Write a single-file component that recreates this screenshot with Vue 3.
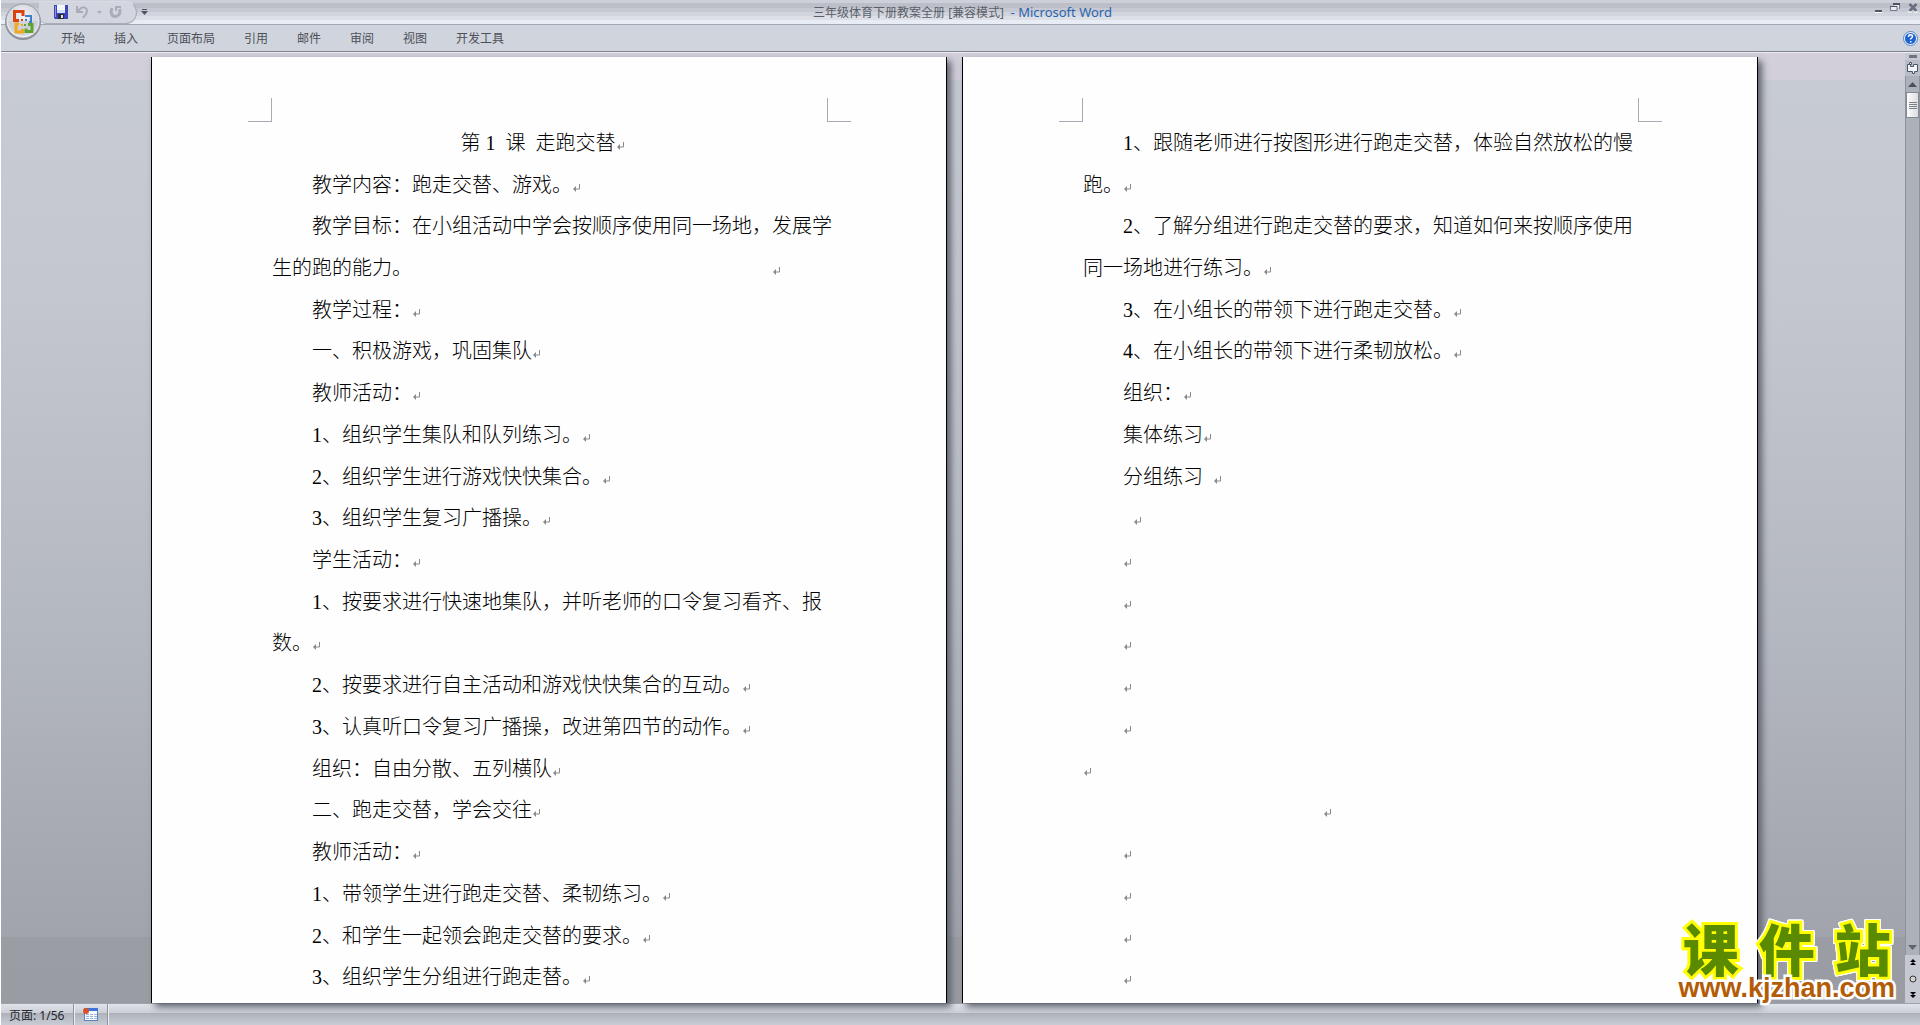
<script setup>
const tabs = ['开始', '插入', '页面布局', '引用', '邮件', '审阅', '视图', '开发工具']

const sp = (n) => ' '.repeat(n)

const pages = [
  [
    { text: '第 1  课  走跑交替', kind: 'title' },
    { text: '教学内容：跑走交替、游戏。' },
    { text: '教学目标：在小组活动中学会按顺序使用同一场地，发展学', noMark: true },
    { text: '生的跑的能力。' + sp(72), kind: 'flush' },
    { text: '教学过程：' },
    { text: '一、积极游戏，巩固集队' },
    { text: '教师活动：' },
    { text: '1、组织学生集队和队列练习。' },
    { text: '2、组织学生进行游戏快快集合。' },
    { text: '3、组织学生复习广播操。' },
    { text: '学生活动：' },
    { text: '1、按要求进行快速地集队，并听老师的口令复习看齐、报', noMark: true },
    { text: '数。', kind: 'flush' },
    { text: '2、按要求进行自主活动和游戏快快集合的互动。' },
    { text: '3、认真听口令复习广播操，改进第四节的动作。' },
    { text: '组织：自由分散、五列横队' },
    { text: '二、跑走交替，学会交往' },
    { text: '教师活动：' },
    { text: '1、带领学生进行跑走交替、柔韧练习。' },
    { text: '2、和学生一起领会跑走交替的要求。' },
    { text: '3、组织学生分组进行跑走替。' },
  ],
  [
    { text: '1、跟随老师进行按图形进行跑走交替，体验自然放松的慢', noMark: true },
    { text: '跑。', kind: 'flush' },
    { text: '2、了解分组进行跑走交替的要求，知道如何来按顺序使用', noMark: true },
    { text: '同一场地进行练习。', kind: 'flush' },
    { text: '3、在小组长的带领下进行跑走交替。' },
    { text: '4、在小组长的带领下进行柔韧放松。' },
    { text: '组织：' },
    { text: '集体练习' },
    { text: '分组练习' + sp(2) },
    { text: sp(2) },
    { text: '' },
    { text: '' },
    { text: '' },
    { text: '' },
    { text: '' },
    { text: '', kind: 'flush' },
    { text: sp(48), kind: 'flush' },
    { text: '' },
    { text: '' },
    { text: '' },
    { text: '' },
  ],
]
</script>

<template>
  <div class="window">
    <header class="head">
      <div class="titlebar">
        <div class="quick">
          <button class="qbtn" aria-label="保存">
            <svg width="14" height="14" viewBox="0 0 14 14">
              <path d="M0 0h14v14H1l-1-1z" fill="#3f45b8" />
              <path d="M1 1h1v11H1z" fill="#8d95e8" />
              <path d="M3 0h8v8H3z" fill="#f2f6fd" />
              <path d="M3 5h8v3H3z" fill="#cfe0f8" />
              <path d="M4 9h6v5H4z" fill="#2b2e38" />
              <path d="M7 10h2v3H7z" fill="#dfe3ee" />
            </svg>
          </button>
          <button class="qbtn" aria-label="撤消">
            <svg width="14" height="14" viewBox="0 0 14 14" fill="none" stroke="#a9adb8" stroke-width="2">
              <path d="M2 1v6h6M3 6l3-3c3-2 6 0 6 3s-2 4-4 7" />
            </svg>
          </button>
          <button class="qbtn small" aria-label="撤消列表">
            <svg width="5" height="3" viewBox="0 0 5 3"><path d="M0 0h5L2.500 3z" fill="#a9adb8" /></svg>
          </button>
          <button class="qbtn" aria-label="重复">
            <svg width="14" height="14" viewBox="0 0 14 14" fill="none" stroke="#a9adb8">
              <path d="M3 3C1 8 3 11.500 6 11.500s6-2.500 4.500-7.500" stroke-width="3" />
              <path d="M7 6V2h5" stroke-width="2" />
            </svg>
          </button>
        </div>
        <button class="qbtn more" aria-label="自定义快速访问工具栏">
          <svg width="7" height="7" viewBox="0 0 7 7" fill="#50545e"><path d="M1 0h5v1H1zM0 2h7L3.500 6z" /></svg>
        </button>
        <h1 class="caption">三年级体育下册教案全册 [兼容模式] <span>&nbsp;- Microsoft Word</span></h1>
        <div class="controls">
          <button aria-label="最小化">
            <svg width="8" height="10" viewBox="0 0 8 10"><path d="M1 7h7v2H1z" fill="#50545e" /><path d="M1 9h7v1H1z" fill="#fff" /></svg>
          </button>
          <button aria-label="还原">
            <svg width="10" height="10" viewBox="0 0 10 10"><path d="M3 1.500h6.500V6M.500 3.500h6.500v4H.500z" fill="#e9ebf2" stroke="#70788a" /><path d="M3 0h7v2H3zM0 3h7v1H0z" fill="#50545e" /></svg>
          </button>
          <button aria-label="关闭">
            <svg width="10" height="10" viewBox="0 0 10 10"><path d="M1.500 1l7 7M8.500 1l-7 7" stroke="#666e80" stroke-width="2.500" /><path d="M0 9h4M6 9h4" stroke="#fff" /></svg>
          </button>
        </div>
        <button class="office" aria-label="Office 按钮">
          <svg width="38" height="40" viewBox="0 0 38 40">
            <defs>
              <radialGradient id="orb" cx=".5" cy=".35" r=".65">
                <stop offset="0" stop-color="#f4f4f7" />
                <stop offset=".6" stop-color="#d6d8df" />
                <stop offset="1" stop-color="#f4f5f8" />
              </radialGradient>
            </defs>
            <circle cx="19" cy="20" r="18" fill="#8b8f98" />
            <circle cx="19" cy="19" r="17" fill="url(#orb)" stroke="#9a9ea8" />
            <path d="M4 19a15 15 0 0 0 30 0z" fill="#c5c8d0" opacity=".6" />
            <g fill="none">
              <path d="M15 18.500h-4.500V9.500H19V14" stroke="#d8430f" stroke-width="3" />
              <path d="M21 14h6v6h-2" stroke="#3e80c8" stroke-width="2" />
              <path d="M15 22h-3v8h6.500v-3" stroke="#f2a81c" stroke-width="3" />
              <path d="M24 22.500h4v7h-6v-3" stroke="#5fa432" stroke-width="3" />
            </g>
            <path d="M17 17h2v2h-2z" fill="#d8430f" /><path d="M21 17h2v2h-2z" fill="#3e80c8" />
            <path d="M17 22h2v2h-2z" fill="#f2a81c" /><path d="M20 22h2v2h-2z" fill="#5fa432" />
          </svg>
        </button>
      </div>
      <nav class="tabs">
        <button v-for="t in tabs" :key="t">{{ t }}</button>
        <button class="help" aria-label="帮助">
          <svg width="15" height="15" viewBox="0 0 15 15">
            <circle cx="7.500" cy="7.500" r="7" fill="#e8f1fc" stroke="#5a86c4" />
            <circle cx="7.500" cy="7.500" r="5.500" fill="#1e62d2" />
            <path d="M5.500 6c0-3 4-3 4-.500 0 1.500-2 1.500-2 3" fill="none" stroke="#fff" stroke-width="1.500" />
            <path d="M7 10h1.500v1.500H7z" fill="#fff" />
          </svg>
        </button>
      </nav>
    </header>

    <main class="work">
      <div class="canvas">
        <article v-for="(page, i) in pages" :key="i" class="page">
          <div class="crops"><i class="crop left"></i><i class="crop right"></i></div>
          <p v-for="(line, n) in page" :key="n" :class="line.kind">
            <span>{{ line.text }}</span>
            <svg v-if="!line.noMark" class="mark" width="9" height="9" viewBox="0 0 9 9">
              <path d="M7.500 1v5H2" fill="none" stroke="#8a8a8a" /><path d="M1 6l3-3v6z" fill="#8a8a8a" />
            </svg>
          </p>
        </article>
      </div>
      <aside class="scroll">
        <div class="split"></div>
        <button class="ruler" aria-label="标尺">
          <svg width="13" height="12" viewBox="0 0 13 12"><path d="M1.500 2.500h3v2h3v-2h4v7h-3v2h-2v-2h-5z" fill="#f4f5f9" stroke="#4c5568" /><path d="M3.500.500h2v2h-2z" fill="#fff" stroke="#4c5568" /></svg>
        </button>
        <div class="track">
          <button class="arrow" aria-label="向上"><svg width="9" height="5" viewBox="0 0 9 5"><path d="M4.500 0L9 5H0z" fill="#4c505a" /></svg></button>
          <div class="thumb"><i></i><i></i><i></i><i></i></div>
          <button class="arrow down" aria-label="向下"><svg width="9" height="5" viewBox="0 0 9 5"><path d="M0 0h9L4.500 5z" fill="#60646e" /></svg></button>
        </div>
        <div class="browse">
          <button aria-label="前一页"><svg width="6" height="7" viewBox="0 0 6 7"><path d="M3 0l3 3H0zM3 3l3 3H0z" /></svg></button>
          <button aria-label="选择浏览对象"><svg width="8" height="8" viewBox="0 0 8 8"><circle cx="4" cy="4" r="3" fill="#d4d4cc" stroke="#33363c" /></svg></button>
          <button aria-label="下一页"><svg width="6" height="7" viewBox="0 0 6 7"><path d="M0 0h6L3 3zM0 3h6L3 6z" /></svg></button>
        </div>
      </aside>
      <div class="brand">
        <div class="brand-name"><span>课</span><span>件</span><span>站</span></div>
        <div class="brand-url">www.kjzhan.com</div>
      </div>
    </main>

    <footer class="status">
      <span class="cell">页面: 1/56</span>
      <button class="cell icon" aria-label="宏">
        <svg width="15" height="13" viewBox="0 0 15 13">
          <path d="M1 0h14v13H1z" fill="#5b83bd" /><path d="M2 3h12v9H2z" fill="#f6f9fd" /><path d="M2 0h13v3H2z" fill="#3e74d8" />
          <path d="M3 6.500h11M3 8.500h11M3 10.500h11" stroke="#9db4d6" stroke-dasharray="3 1" /><circle cx="3" cy="3" r="3" fill="#d8512a" />
        </svg>
      </button>
    </footer>
  </div>
</template>

<style>
body {
  background: #c7cbd3;
}
</style>

<style scoped>
* {
  box-sizing: border-box;
}
.window {
  display: flex;
  flex-direction: column;
  height: 100vh;
  border-left: 1px solid #fff;
  overflow: hidden;
  font-family: "Noto Sans", "Noto Sans CJK SC", sans-serif;
  font-size: 12px;
  color: #4c505a;
}
button {
  display: flex;
  align-items: center;
  justify-content: center;
  padding: 0;
  border: 0;
  background: none;
  font: inherit;
  color: inherit;
}
svg {
  display: block;
  flex: none;
}
.titlebar {
  position: relative;
  display: flex;
  align-items: center;
  height: 25px;
  border-bottom: 1px solid #a3a7b2;
  background: linear-gradient(#cdd0d9 0 3px, #bcbfc8 3px 8px, #c6c9d1 8px 12px, #d0d4dc 12px 16px, #dcdfe5 16px 20px, #e8ecf5 20px);
}
.quick {
  display: flex;
  align-items: center;
  gap: 7px;
  height: 23px;
  margin-left: 38px;
  padding: 0 13px 0 15px;
  border: 1px solid #a9adb9;
  border-top-color: #d9dce4;
  border-left: 0;
  border-radius: 0 12px 12px 8px;
  background: #d3d6de;
}
.qbtn {
  width: 14px;
  height: 20px;
}
.small {
  width: 6px;
}
.more {
  width: 7px;
  margin-left: 4px;
}
.caption {
  position: absolute;
  left: 0;
  right: 0;
  margin: 0;
  padding-left: 4px;
  text-align: center;
  font-size: 12px;
  font-weight: 400;
  line-height: 24px;
  white-space: nowrap;
  color: #5a5e68;
  pointer-events: none;
}
.caption span {
  font-size: 13px;
  color: #2c64b0;
}
.controls {
  display: flex;
  gap: 8px;
  margin-left: auto;
  padding: 0 2px 8px 0;
}
.office {
  position: absolute;
  left: 3px;
  top: 2px;
  z-index: 2;
}
.tabs {
  display: flex;
  align-items: center;
  gap: 29px;
  height: 27px;
  padding: 0 2px 0 60px;
  border-bottom: 1px solid #80848c;
  background: #d0d4dc;
}
.help {
  margin-left: auto;
}
.work {
  position: relative;
  display: flex;
  flex: 1;
  min-height: 0;
  border-top: 1px solid #eceef2;
  background: linear-gradient(#d2cfda 0 27px, #c7cbd3 27px, #c4c7cf 25%, #b4b8c1 60%, #a1a4ac 93%, #9a9ea4 93%, #999da3);
}
.canvas {
  display: flex;
  flex: 1;
  justify-content: center;
  gap: 15px;
  padding: 4px 0 0 3px;
}
.page {
  display: flex;
  flex-direction: column;
  width: 796px;
  padding: 41px 95px 5px 120px;
  border: solid #000;
  border-width: 0 1px;
  background: #fefefe;
  box-shadow: 4px 4px 7px #5d616a;
  color: #000;
}
.crops {
  display: flex;
  justify-content: space-between;
  height: 24px;
  flex: none;
  margin: 0 0 0 -24px;
}
.crop {
  width: 24px;
  border-bottom: 1px solid #a9a9b3;
}
.crop.left {
  border-right: 1px solid #a9a9b3;
}
.crop.right {
  border-left: 1px solid #a9a9b3;
}
.page p {
  display: flex;
  flex: 1;
  align-items: center;
  min-height: 0;
  margin: 0;
  padding-left: 40px;
  font-family: "Liberation Serif", "Noto Sans CJK SC", serif;
  font-size: 20px;
  font-weight: 300;
  line-height: 30px;
  white-space: pre;
}
.page p.flush {
  padding-left: 0;
}
.page p.title {
  justify-content: center;
  padding: 0 38px 0 0;
}
.mark {
  margin-top: 5px;
}
.scroll {
  display: flex;
  flex-direction: column;
  width: 15px;
  background: #c6c9d1;
}
.split {
  width: 8px;
  height: 3px;
  margin: 2px auto 2px;
  background: #70747c;
}
.ruler {
  height: 16px;
  background: #b9bdc6;
}
.track {
  display: flex;
  flex: 1;
  flex-direction: column;
  border: solid #8e929b;
  border-width: 0 1px;
  background: #adb1ba;
}
.arrow {
  height: 16px;
}
.down {
  margin-top: auto;
}
.thumb {
  display: flex;
  flex-direction: column;
  align-items: center;
  justify-content: center;
  gap: 1px;
  height: 26px;
  border: 1px solid #858992;
  background: linear-gradient(90deg, #fdfdfb, #dcdde4);
}
.thumb i {
  width: 8px;
  height: 1px;
  background: #7b7f88;
}
.browse {
  display: flex;
  flex-direction: column;
  justify-content: space-around;
  height: 48px;
}
.brand {
  position: absolute;
  right: 25px;
  bottom: 0;
  display: flex;
  flex-direction: column;
  align-items: center;
}
.brand-name {
  display: flex;
  gap: 20px;
  font-family: "Noto Sans CJK SC", sans-serif;
  font-size: 56px;
  font-weight: 900;
  line-height: 52px;
  color: #5a8a00;
  -webkit-text-stroke: 6px #ff0;
  paint-order: stroke fill;
  filter: drop-shadow(1px 0 #fff) drop-shadow(-1px 0 #fff) drop-shadow(0 1px #fff) drop-shadow(0 -1px #fff);
}
.brand-url {
  position: relative;
  z-index: 1;
  font-family: "Liberation Sans", sans-serif;
  font-size: 27px;
  font-weight: 700;
  line-height: 30px;
  color: #b25c06;
  -webkit-text-stroke: 5px #fff;
  paint-order: stroke fill;
}
.status {
  display: flex;
  height: 22px;
  border-top: 1px solid #9ea2aa;
  background: linear-gradient(#e0e3e9, #cbced6 9px, #adb1ba 9px, #c8ccd4);
  color: #22252c;
}
.cell {
  display: flex;
  align-items: center;
  padding: 0 9px 0 8px;
  border-right: 1px solid #90949d;
  box-shadow: 1px 0 #eceef2;
}
.icon {
  padding: 0 9px;
}
</style>
